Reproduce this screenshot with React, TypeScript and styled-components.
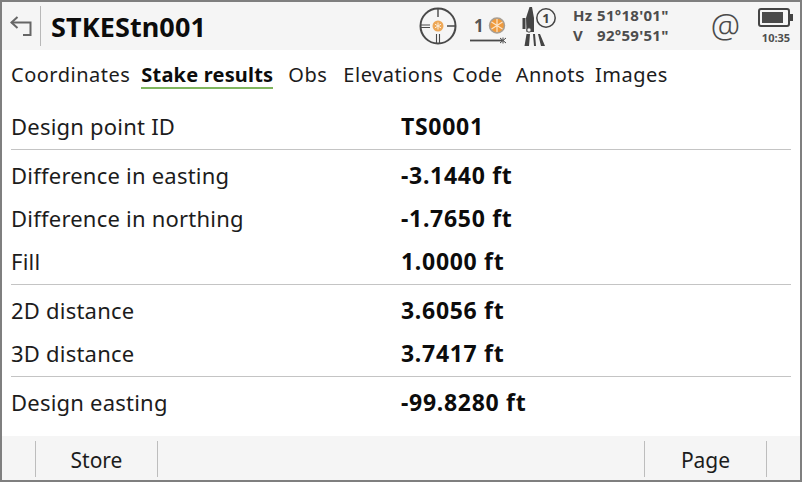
import React from 'react';
import styled, { createGlobalStyle } from 'styled-components';

const Global = createGlobalStyle`
  html, body { margin: 0; padding: 0; background: #fff; }
  body { font-family: "Noto Sans", "Open Sans", sans-serif; color: #111; }
`;

const Frame = styled.div`
  width: 802px;
  height: 482px;
  box-sizing: border-box;
  border: 2px solid #7f7f7f;
  display: flex;
  flex-direction: column;
  background: #fff;
  overflow: hidden;
`;

const Header = styled.header`
  height: 48px;
  flex: none;
  background: #f5f5f5;
  display: flex;
  align-items: center;
`;

const BackButton = styled.div`
  width: 39px;
  height: 40px;
  box-sizing: border-box;
  border-right: 1px solid #b8b8b8;
  display: flex;
  align-items: center;
  padding-left: 8px;
`;

const Title = styled.h1`
  margin: 2px 0 0 10px;
  width: 367px;
  font-size: 27px;
  line-height: 40px;
  font-weight: 700;
  letter-spacing: 0.1px;
  color: #0c0c0c;
`;

const StationSlot = styled.div`
  margin-left: 8px;
  height: 44px;
  display: flex;
`;

const Angles = styled.div`
  margin: 0 0 2px 13px;
  width: 136px;
  font-size: 15px;
  line-height: 20px;
  font-weight: 700;
  letter-spacing: 0.3px;
  color: #4d4d4d;
`;

const AngleRow = styled.div`
  display: flex;
  & > span:first-child { width: 24px; }
`;

const At = styled.div`
  width: 33px;
  font-size: 33px;
  line-height: 40px;
  font-weight: 300;
  text-align: center;
  color: #4a4a4a;
`;

const BatteryBox = styled.div`
  margin-left: 14px;
  width: 40px;
  display: flex;
  flex-direction: column;
  align-items: center;
`;

const Clock = styled.div`
  margin-top: 3px;
  font-size: 11px;
  line-height: 14px;
  font-weight: 700;
  color: #4d4d4d;
`;

const Tabs = styled.nav`
  height: 42px;
  flex: none;
  box-sizing: border-box;
  display: flex;
  align-items: flex-start;
  padding: 11px 0 0 9px;
`;

const Tab = styled.div<{ $active?: boolean; $gap: number }>`
  height: 28px;
  box-sizing: border-box;
  margin-right: ${p => p.$gap}px;
  font-size: 20px;
  line-height: 27px;
  font-weight: ${p => (p.$active ? 700 : 400)};
  letter-spacing: ${p => (p.$active ? '0.2px' : '0.5px')};
  color: ${p => (p.$active ? '#0c0c0c' : '#1c1c1c')};
  border-bottom: 2px solid ${p => (p.$active ? '#7fb55e' : 'transparent')};
`;

const Content = styled.main`
  flex: 1;
  min-height: 0;
  padding: 0 9px;
`;

const Section = styled.section`
  padding: 4px 0 1px;
  border-bottom: 1px solid #c4c4c4;
  &:first-child { padding-top: 13px; }
  &:last-child { border-bottom: none; }
`;

const Row = styled.div`
  height: 43px;
  box-sizing: border-box;
  padding-bottom: 2px;
  display: flex;
  align-items: center;
`;

const Label = styled.div`
  width: 390px;
  font-size: 22px;
  letter-spacing: 0.22px;
  color: #1c1c1c;
`;

const Value = styled.div`
  font-size: 23px;
  font-weight: 700;
  letter-spacing: 0.7px;
  color: #0c0c0c;
`;

const Footer = styled.footer`
  height: 44px;
  flex: none;
  box-sizing: border-box;
  background: #f5f5f5;
  display: flex;
  align-items: flex-start;
  padding: 5px 33px 3px 33px;
`;

const SoftKey = styled.div<{ $width: number }>`
  width: ${p => p.$width}px;
  height: 36px;
  box-sizing: border-box;
  font-size: 21px;
  line-height: 38px;
  text-align: center;
  color: #1c1c1c;
  border-left: 1px solid #bdbdbd;
  &:last-child { border-right: 1px solid #bdbdbd; }
`;

const FooterGroup = styled.div<{ $grow?: boolean }>`
  display: flex;
  flex: ${p => (p.$grow ? 1 : 'none')};
`;

const BackIcon = () => (
  <svg width="24" height="24" viewBox="0 0 24 24" fill="none" stroke="#666" strokeWidth="2">
    <path d="M7.5 3 L1.5 8.5 L7.5 14" />
    <path d="M1.5 8.5 H20.5 V21 H13" />
  </svg>
);

const TargetIcon = () => (
  <svg width="40" height="40" viewBox="0 0 40 40" fill="none">
    <circle cx="20" cy="20" r="17.5" stroke="#4a4a4a" strokeWidth="2" />
    <path d="M20 3 V11 M29 20 H37" stroke="#4a4a4a" strokeWidth="1.4" />
    <path d="M3 19 H12 M3 21.5 H12 M18.5 28 V37 M21.5 28 V37" stroke="#4a4a4a" strokeWidth="1.1" />
    <circle cx="20" cy="20" r="5.5" fill="#eda858" />
    <path d="M20 16.5 V23.5 M17 18.2 L23 21.8 M23 18.2 L17 21.8" stroke="#fbeedd" strokeWidth="1" />
  </svg>
);

const PrismIcon = () => (
  <svg width="50" height="40" viewBox="0 0 50 40" fill="none">
    <text x="16" y="26" fontFamily="Noto Sans" fontWeight="700" fontSize="17" fill="#555">1</text>
    <circle cx="39" cy="19.5" r="7.5" fill="#ef9a3c" stroke="#a89f94" strokeWidth="1.5" />
    <path d="M39 13 V26 M33.5 16 L44.5 23 M44.5 16 L33.5 23" stroke="#fbe4c8" strokeWidth="1.2" />
    <path d="M12 34.5 H44" stroke="#4a4a4a" strokeWidth="1.8" />
    <path d="M45 31.5 V37.5 M42 32 L48 37 M48 32 L42 37" stroke="#4a4a4a" strokeWidth="1" />
  </svg>
);

const StationIcon = () => (
  <svg width="44" height="44" viewBox="0 0 44 44" fill="none">
    <path d="M10.5 28 L10 14 L13.5 3 H16 L18 14 V28 Z" fill="#444" />
    <rect x="6.5" y="14" width="3" height="11" fill="#444" />
    <circle cx="13" cy="26" r="2.2" fill="#f5f5f5" stroke="#444" />
    <path d="M10.5 30 L8.5 42 H13 L14 30 Z M17 30 L18 42 H20 L19 30 Z M24 30 L29 42 H25 L22 30 Z" fill="#444" />
    <circle cx="30" cy="14" r="9.2" fill="#f5f5f5" stroke="#444" strokeWidth="1.5" />
    <text x="30" y="19" textAnchor="middle" fontFamily="Noto Sans" fontWeight="700" fontSize="13" fill="#444">1</text>
  </svg>
);

const BatteryIcon = () => (
  <svg width="36" height="21" viewBox="0 0 36 21" fill="none">
    <rect x="1" y="2" width="30" height="17" rx="2" stroke="#444" strokeWidth="2" />
    <rect x="4" y="5" width="21" height="11" fill="#4a4a4a" />
    <rect x="32" y="7" width="3" height="7" fill="#444" />
  </svg>
);

const sections = [
  [['Design point ID', 'TS0001']],
  [
    ['Difference in easting', '-3.1440 ft'],
    ['Difference in northing', '-1.7650 ft'],
    ['Fill', '1.0000 ft'],
  ],
  [
    ['2D distance', '3.6056 ft'],
    ['3D distance', '3.7417 ft'],
  ],
  [['Design easting', '-99.8280 ft']],
];

const tabs = [
  { name: 'Coordinates', gap: 11 },
  { name: 'Stake results', gap: 15 },
  { name: 'Obs', gap: 16 },
  { name: 'Elevations', gap: 9 },
  { name: 'Code', gap: 13 },
  { name: 'Annots', gap: 10 },
  { name: 'Images', gap: 0 },
];

export default function App() {
  return (
    <>
      <Global />
      <Frame>
        <Header>
          <BackButton><BackIcon /></BackButton>
          <Title>STKEStn001</Title>
          <TargetIcon />
          <PrismIcon />
          <StationSlot><StationIcon /></StationSlot>
          <Angles>
            <AngleRow><span>Hz</span><span>51°18'01"</span></AngleRow>
            <AngleRow><span>V</span><span>92°59'51"</span></AngleRow>
          </Angles>
          <At>@</At>
          <BatteryBox>
            <BatteryIcon />
            <Clock>10:35</Clock>
          </BatteryBox>
        </Header>
        <Tabs>
          {tabs.map(t => (
            <Tab key={t.name} $active={t.name === 'Stake results'} $gap={t.gap}>{t.name}</Tab>
          ))}
        </Tabs>
        <Content>
          {sections.map((group, i) => (
            <Section key={i}>
              {group.map(([label, value]) => (
                <Row key={label}>
                  <Label>{label}</Label>
                  <Value>{value}</Value>
                </Row>
              ))}
            </Section>
          ))}
        </Content>
        <Footer>
          <FooterGroup $grow>
            <SoftKey $width={123}>Store</SoftKey>
          </FooterGroup>
          <FooterGroup>
            <SoftKey $width={123}>Page</SoftKey>
          </FooterGroup>
        </Footer>
      </Frame>
    </>
  );
}
